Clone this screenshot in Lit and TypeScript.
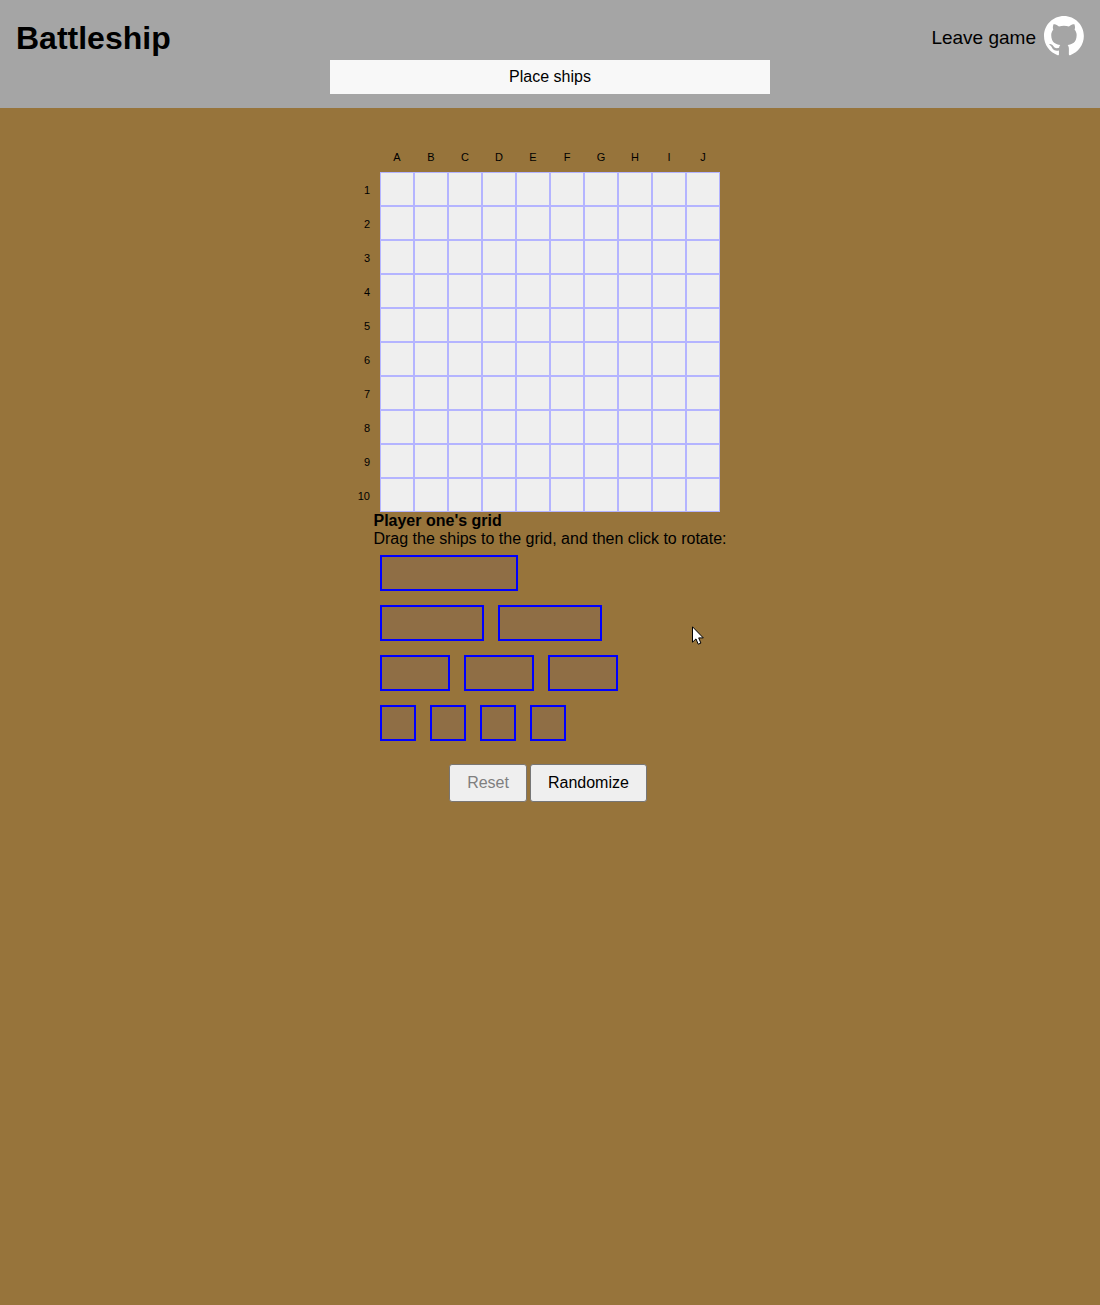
import { LitElement, html, css } from "lit";
import { customElement, property } from "lit/decorators.js";

const COLUMNS = ["A", "B", "C", "D", "E", "F", "G", "H", "I", "J"];
const ROWS = [1, 2, 3, 4, 5, 6, 7, 8, 9, 10];
const FLEET = [[4], [3, 3], [2, 2, 2], [1, 1, 1, 1]];

@customElement("game-header")
export class GameHeader extends LitElement {
  @property() status = "";

  static styles = css`
    :host {
      display: block;
      background: #a5a5a5;
      padding: 16px 16px 14px;
    }
    .bar {
      display: flex;
      align-items: center;
      justify-content: space-between;
      height: 40px;
    }
    .title {
      margin: 0;
      font-size: 32px;
      line-height: 40px;
      padding-top: 4px;
    }
    .links {
      display: flex;
      align-items: center;
      gap: 8px;
    }
    .leave {
      color: #000;
      font-size: 19px;
      line-height: 24px;
      padding-top: 4px;
      text-decoration: none;
    }
    .github,
    .mark {
      display: block;
      width: 40px;
      height: 40px;
    }
    .status {
      box-sizing: border-box;
      width: 440px;
      max-width: 100%;
      margin: 4px auto 0;
      padding: 8px;
      background: #f8f8f8;
      font-size: 16px;
      line-height: 18px;
      text-align: center;
    }
  `;

  render() {
    return html`
      <div class="bar">
        <h1 class="title">Battleship</h1>
        <nav class="links">
          <a class="leave" href="#">Leave game</a>
          <a class="github" href="#" aria-label="GitHub">
            <svg class="mark" viewBox="0 0 98 98" fill="#fff" aria-hidden="true">
              <path
                fill-rule="evenodd"
                d="M48.854 0C21.839 0 0 22 0 49.217c0 21.756 13.993 40.172 33.405 46.69 2.427.49 3.316-1.059 3.316-2.362 0-1.141-.08-5.052-.08-9.127-13.59 2.934-16.42-5.867-16.42-5.867-2.184-5.704-5.42-7.17-5.42-7.17-4.448-3.015.324-3.015.324-3.015 4.934.326 7.523 5.052 7.523 5.052 4.367 7.496 11.404 5.378 14.235 4.074.404-3.178 1.699-5.378 3.074-6.6-10.839-1.141-22.243-5.378-22.243-24.283 0-5.378 1.94-9.778 5.014-13.2-.485-1.222-2.184-6.275.486-13.038 0 0 4.125-1.304 13.426 5.052a46.97 46.97 0 0 1 12.214-1.63c4.125 0 8.33.571 12.213 1.63 9.302-6.356 13.427-5.052 13.427-5.052 2.67 6.763.97 11.816.485 13.038 3.155 3.422 5.015 7.822 5.015 13.2 0 18.905-11.404 23.06-22.324 24.283 1.78 1.548 3.316 4.481 3.316 9.126 0 6.6-.08 11.897-.08 13.526 0 1.304.89 2.853 3.316 2.364 19.412-6.52 33.405-24.935 33.405-46.691C97.707 22 75.788 0 48.854 0z"
              />
            </svg>
          </a>
        </nav>
      </div>
      <div class="status" role="status">${this.status}</div>
    `;
  }
}

@customElement("game-board")
export class GameBoard extends LitElement {
  static styles = css`
    :host {
      display: block;
    }
    .board {
      table-layout: fixed;
      width: 370px;
      margin-right: 30px;
      border-collapse: separate;
      border-spacing: 0;
      font-size: 11px;
      line-height: 12px;
    }
    .label-col {
      width: 30px;
    }
    .column,
    .corner {
      height: 30px;
      padding: 0;
      font-weight: 400;
      text-align: center;
    }
    .row {
      padding: 2px 10px 0 0;
      font-weight: 400;
      text-align: right;
    }
    .cell {
      box-sizing: border-box;
      height: 34px;
      padding: 0;
      border: 1px solid #b4b4ff;
      background: #efefef;
    }
  `;

  render() {
    return html`
      <table class="board">
        <colgroup>
          <col class="label-col" />
          <col span="10" />
        </colgroup>
        <thead>
          <tr>
            <td class="corner"></td>
            ${COLUMNS.map((c) => html`<th class="column" scope="col">${c}</th>`)}
          </tr>
        </thead>
        <tbody>
          ${ROWS.map(
            (r) => html`<tr>
              <th class="row" scope="row">${r}</th>
              ${COLUMNS.map(() => html`<td class="cell"></td>`)}
            </tr>`
          )}
        </tbody>
      </table>
    `;
  }
}

@customElement("ship-yard")
export class ShipYard extends LitElement {
  static styles = css`
    :host {
      display: flex;
      flex-direction: column;
      gap: 14px;
    }
    .group {
      display: flex;
      gap: 14px;
    }
    .ship {
      box-sizing: border-box;
      height: 36px;
      padding: 0;
      border: 2px solid #00f;
      border-radius: 0;
      background: rgba(0, 0, 255, 0.05);
      cursor: move;
    }
  `;

  render() {
    return FLEET.map(
      (group) => html`<div class="group">
        ${group.map(
          (size) => html`<button
            class="ship"
            type="button"
            draggable="true"
            aria-label="Ship, length ${size}"
            style="width:${size * 34 + 2}px"
          ></button>`
        )}
      </div>`
    );
  }
}

@customElement("app-root")
export class AppRoot extends LitElement {
  static styles = css`
    :host {
      display: block;
      position: relative;
      min-height: 100vh;
      background: #97743b;
      color: #000;
      font-family: Arial, "Liberation Sans", sans-serif;
      font-size: 16px;
      line-height: 18px;
    }
    .main {
      display: flex;
      flex-direction: column;
      align-items: center;
      padding-top: 34px;
    }
    .name {
      margin: 0;
      font-size: 16px;
      line-height: 18px;
    }
    .hint {
      margin: 0;
    }
    .yard {
      width: 340px;
      margin-top: 7px;
    }
    .actions {
      display: flex;
      gap: 3px;
      margin: 23px 4px 0 0;
    }
    .action {
      padding: 8px 17px;
      border: 1px solid #767676;
      border-radius: 3px;
      background: #efefef;
      color: #000;
      font-family: inherit;
      font-size: 16px;
      line-height: 20px;
    }
    .action:disabled {
      border-color: #7a7672;
      color: #7f7f7f;
    }
    .pointer {
      position: absolute;
      left: 692px;
      top: 626px;
      width: 12px;
      height: 19px;
      pointer-events: none;
    }
  `;

  render() {
    return html`
      <game-header status="Place ships"></game-header>
      <main class="main">
        <game-board></game-board>
        <section>
          <h2 class="name">Player one's grid</h2>
          <p class="hint">Drag the ships to the grid, and then click to rotate:</p>
        </section>
        <ship-yard class="yard"></ship-yard>
        <div class="actions">
          <button class="action" type="button" disabled>Reset</button>
          <button class="action" type="button">Randomize</button>
        </div>
      </main>
      <svg class="pointer" viewBox="0 0 12 19" aria-hidden="true">
        <path
          d="M.5.8V16.2L4 12.9L6.2 18.2L8.9 17.1L6.7 11.9H11.3Z"
          fill="#fff"
          stroke="#000"
          stroke-width="1"
        />
      </svg>
    `;
  }
}
